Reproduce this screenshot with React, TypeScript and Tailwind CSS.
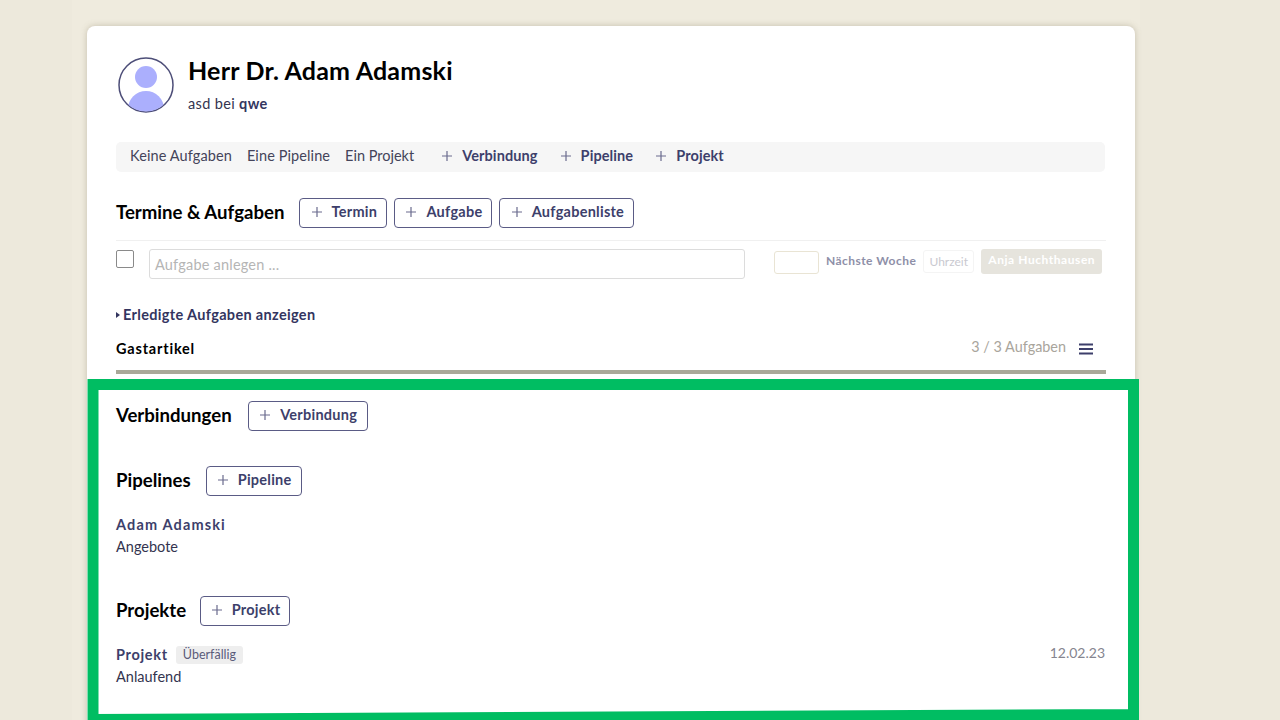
import React from "react";

const font = "font-['Lato','Liberation_Sans',sans-serif]";

function Plus() {
  return (
    <svg width="10" height="10" viewBox="0 0 10 10" className="shrink-0">
      <path d="M5 0v10M0 5h10" stroke="#6a6b8e" strokeWidth="1.2" fill="none" />
    </svg>
  );
}

function Btn({ label, w }: { label: string; w: string }) {
  return (
    <button className={`${w} flex h-[30px] items-center justify-center gap-[10px] rounded-[4px] border border-[#5a5b85] bg-white pb-[2px] pl-[2px] text-[14.5px] font-bold tracking-[0.25px] text-[#3d3f6b]`}>
      <Plus />
      <span>{label}</span>
    </button>
  );
}

function Link({ label }: { label: string }) {
  return (
    <span className="flex items-center gap-[10px] text-[14.5px] font-bold tracking-[0.1px] text-[#3d3f6b]">
      <Plus />
      {label}
    </span>
  );
}

function SectionTitle({ children }: { children: React.ReactNode }) {
  return <h2 className="text-[18.6px] font-bold text-black">{children}</h2>;
}

export default function App() {
  return (
    <div className={`${font} relative h-[720px] w-[1280px] overflow-hidden bg-[#ede9dc] pl-[72px] text-[#1c1c28]`}>
      <div className="h-full w-[1068px] bg-[#efebde] pt-[26px] pl-[15px]">
        <div className="h-[760px] w-[1048px] rounded-t-[8px] bg-white pt-[31px] pl-[29px] shadow-[0_0_6px_rgba(120,110,80,0.35)]">
          <div className="flex h-[55px] items-start gap-[14px] pl-[2px]">
            <svg width="56" height="56" viewBox="0 0 56 56" className="shrink-0">
              <defs>
                <clipPath id="c"><circle cx="28" cy="28" r="26.5" /></clipPath>
              </defs>
              <circle cx="28" cy="28" r="27" fill="#fff" stroke="#4d4e78" strokeWidth="1.5" />
              <circle cx="28" cy="20" r="11" fill="#abaffd" />
              <ellipse cx="28" cy="52" rx="18" ry="18" fill="#abaffd" clipPath="url(#c)" />
            </svg>
            <div>
              <h1 className="mt-[-2px] text-[25px] leading-[30px] font-bold tracking-[0.2px] text-black">Herr Dr. Adam Adamski</h1>
              <p className="mt-[10px] text-[14.5px] leading-[18px] tracking-[0.35px] text-[#33344f]">
                asd bei <b className="text-[#33355f]">qwe</b>
              </p>
            </div>
          </div>

          <div className="mt-[30px] flex h-[30px] w-[989px] items-center rounded-[5px] bg-[#f6f6f6] pb-[2px] pl-[14px] text-[14.5px] text-[#44445a]">
            <span className="tracking-[0.1px]">Keine Aufgaben</span>
            <span className="ml-[15px] tracking-[0.1px]">Eine Pipeline</span>
            <span className="ml-[15px]">Ein Projekt</span>
            <span className="ml-[28px] flex items-center gap-[23px]">
              <Link label="Verbindung" />
              <Link label="Pipeline" />
              <Link label="Projekt" />
            </span>
          </div>

          <div className="mt-[26px] flex h-[30px] items-center gap-[15px]">
            <SectionTitle>Termine &amp; Aufgaben</SectionTitle>
            <div className="flex gap-[7px]">
              <Btn label="Termin" w="w-[88px]" />
              <Btn label="Aufgabe" w="w-[98px]" />
              <Btn label="Aufgabenliste" w="w-[135px]" />
            </div>
          </div>

          <div className="mt-[12px] w-[990px] border-t border-[#f0f0f0] pt-[8px]">
            <div className="flex items-start">
              <span className="mt-px h-[18px] w-[18px] rounded-[2px] border border-[#8a8a8a]" />
              <div className="ml-[15px] flex h-[30px] w-[596px] items-center rounded-[3px] border border-[#dcdcdc] pt-[2px] pl-[5px] text-[14.5px] tracking-[0.2px] text-[#b5b5b5]">Aufgabe anlegen ...</div>
              <div className="mt-[2px] ml-[29px] h-[23px] w-[45px] rounded-[3px] border border-[#e9e4d4]" />
              <span className="mt-[3px] ml-[7px] text-[12px] font-bold tracking-[0.45px] text-[#8e8fa8]">Nächste Woche</span>
              <div className="mt-px ml-[7px] flex h-[23px] w-[51px] items-center justify-center rounded-[3px] border border-[#f4f4f4] text-[12px] text-[#c9c9d0]">Uhrzeit</div>
              <div className="ml-[7px] flex h-[25px] w-[121px] items-center justify-center rounded-[3px] bg-[#e6e4dd] pb-[4px] text-[12px] font-bold tracking-[0.55px] text-white">Anja Huchthausen</div>
            </div>
          </div>

          <div className="mt-[27px] flex items-center gap-[3px] text-[14.5px] leading-[18px] font-bold tracking-[0.33px] text-[#33355f]">
            <span className="h-0 w-0 border-y-[3px] border-l-[4px] border-y-transparent border-l-[#33355f]" />
            Erledigte Aufgaben anzeigen
          </div>

          <div className="mt-[14px] flex h-[24px] w-[990px] items-start justify-between">
            <span className="mt-[2px] text-[14.5px] leading-[18px] font-bold tracking-[0.8px] text-black">Gastartikel</span>
            <span className="flex items-start gap-[13px] pr-[13px]">
              <span className="text-[14.4px] leading-[18px] text-[#a9a59c]">3 / 3 Aufgaben</span>
              <svg width="14" height="12" viewBox="0 0 14 12" className="mt-[5px]">
                <path d="M0 1.5h14M0 6h14M0 10.5h14" stroke="#3d3f6b" strokeWidth="2" />
              </svg>
            </span>
          </div>
          <div className="mt-[8px] h-[4px] w-[990px] bg-[#a9a899]" />

          <div className="mt-[27px] flex h-[30px] items-center gap-[16px]">
            <SectionTitle>Verbindungen</SectionTitle>
            <Btn label="Verbindung" w="w-[120px]" />
          </div>

          <div className="mt-[35px] flex h-[30px] items-center gap-[15px]">
            <SectionTitle>Pipelines</SectionTitle>
            <Btn label="Pipeline" w="w-[96px]" />
          </div>
          <p className="mt-[20px] text-[14.5px] leading-[18px] font-bold tracking-[1.15px] text-[#3d3f6b]">Adam Adamski</p>
          <p className="mt-[4px] text-[14.5px] leading-[18px] text-[#33344f]">Angebote</p>

          <div className="mt-[40px] flex h-[30px] items-center gap-[14px]">
            <SectionTitle>Projekte</SectionTitle>
            <Btn label="Projekt" w="w-[90px]" />
          </div>
          <div className="mt-[20px] flex w-[989px] items-start justify-between">
            <div>
              <div className="flex items-center gap-[8px]">
                <span className="text-[14.5px] leading-[18px] font-bold tracking-[0.7px] text-[#3d3f6b]">Projekt</span>
                <span className="flex h-[18px] items-center rounded-[3px] bg-[#eeeeee] px-[7px] text-[12.5px] text-[#5a5b7a]">Überfällig</span>
              </div>
              <p className="mt-[4px] text-[14.5px] leading-[18px] text-[#33344f]">Anlaufend</p>
            </div>
            <span className="mt-[-2px] text-[14px] leading-[18px] text-[#85858f]">12.02.23</span>
          </div>
        </div>
      </div>
      <svg className="absolute top-0 left-0" width="1280" height="720" viewBox="0 0 1280 720" fill="none">
        <path d="M93 384.500H1133.500V714.500L93 719.500Z" stroke="#00bd62" strokeWidth="11" />
      </svg>
    </div>
  );
}
